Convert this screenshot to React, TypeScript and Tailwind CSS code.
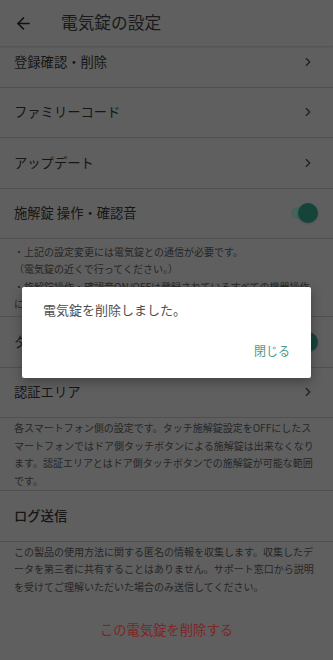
import { ArrowLeft, ChevronRight } from "lucide-react";

const font = { fontFamily: '"Noto Sans CJK JP", "Noto Sans", sans-serif' };

function Row({ label, bold }: { label: string; bold?: boolean }) {
  return (
    <div className="flex h-[50.5px] items-center justify-between border-b border-[#4f4f4f] pl-[14px] pr-[18px]">
      <span className={`text-[13.3px] text-[#161616] ${bold ? "font-medium" : ""}`}>{label}</span>
      {!bold && <ChevronRight size={14} strokeWidth={2} className="text-[#1e1e1e]" />}
    </div>
  );
}

function ToggleRow({ label }: { label: string }) {
  return (
    <div className="flex h-[50.5px] items-center justify-between border-b border-[#4f4f4f] pl-[14px] pr-[16px]">
      <span className="text-[13.3px] text-[#161616]">{label}</span>
      <div className="relative h-[12px] w-[26px] rounded-full bg-[#48625b]">
        <div className="absolute -right-[1px] -top-[4px] h-[20px] w-[20px] rounded-full bg-[#15443a] shadow" />
      </div>
    </div>
  );
}

function Note({ children }: { children: React.ReactNode }) {
  return (
    <div className="border-b border-[#4f4f4f] px-[14px] py-[1px] text-[10px] leading-[17.5px] text-[#262626]">
      {children}
    </div>
  );
}

export default function App() {
  return (
    <div style={font} className="relative h-[660px] w-[333px] overflow-hidden bg-[#5f5f5f]">
      <div className="relative z-10 flex h-[46px] items-center bg-[#5f5f5f] shadow-[0_1px_2px_rgba(0,0,0,0.15)]">
        <ArrowLeft size={19} strokeWidth={2} className="ml-[14px] text-[#111]" />
        <span className="ml-[28px] text-[16.7px] text-[#1a1a1a]">電気錠の設定</span>
      </div>

      <div className="-mt-[9px]">
        <Row label="登録確認・削除" />
        <Row label="ファミリーコード" />
        <Row label="アップデート" />
        <ToggleRow label="施解錠 操作・確認音" />
        <div className="border-b border-[#4f4f4f] px-[14px] py-[3.5px] text-[10px] leading-[17.5px] text-[#262626]">
          <p>・上記の設定変更には電気錠との通信が必要です。</p>
          <p>（電気錠の近くで行ってください。）</p>
          <p>・施解錠操作・確認音ON/OFFは登録されているすべての機器操作に反映されます。</p>
        </div>
        <ToggleRow label="タッチ施解錠設定" />
        <Row label="認証エリア" />
        <Note>
          各スマートフォン側の設定です。タッチ施解錠設定をOFFにしたスマートフォンではドア側タッチボタンによる施解錠は出来なくなります。認証エリアとはドア側タッチボタンでの施解錠が可能な範囲です。
        </Note>
        <Row label="ログ送信" bold />
        <p className="px-[14px] pt-[1px] text-[10px] leading-[17.5px] text-[#262626]">
          この製品の使用方法に関する匿名の情報を収集します。収集したデータを第三者に共有することはありません。サポート窓口から説明を受けてご理解いただいた場合のみ送信してください。
        </p>
        <div className="mt-[25px] flex justify-center">
          <span className="text-[13.3px] text-[#7d2626]">この電気錠を削除する</span>
        </div>
      </div>

      <div className="absolute inset-0 z-20 flex items-start justify-center pt-[287px]">
        <div className="h-[91px] w-[289px] rounded-[2px] bg-white shadow-[0_4px_12px_rgba(0,0,0,0.3)]">
          <p className="pl-[21px] pt-[13px] text-[13px] leading-[20px] text-[#505050]">
            電気錠を削除しました。
          </p>
          <div className="flex justify-end pr-[21px] pt-[22px]">
            <span className="text-[12px] text-[#4c9b8c]">閉じる</span>
          </div>
        </div>
      </div>
    </div>
  );
}
